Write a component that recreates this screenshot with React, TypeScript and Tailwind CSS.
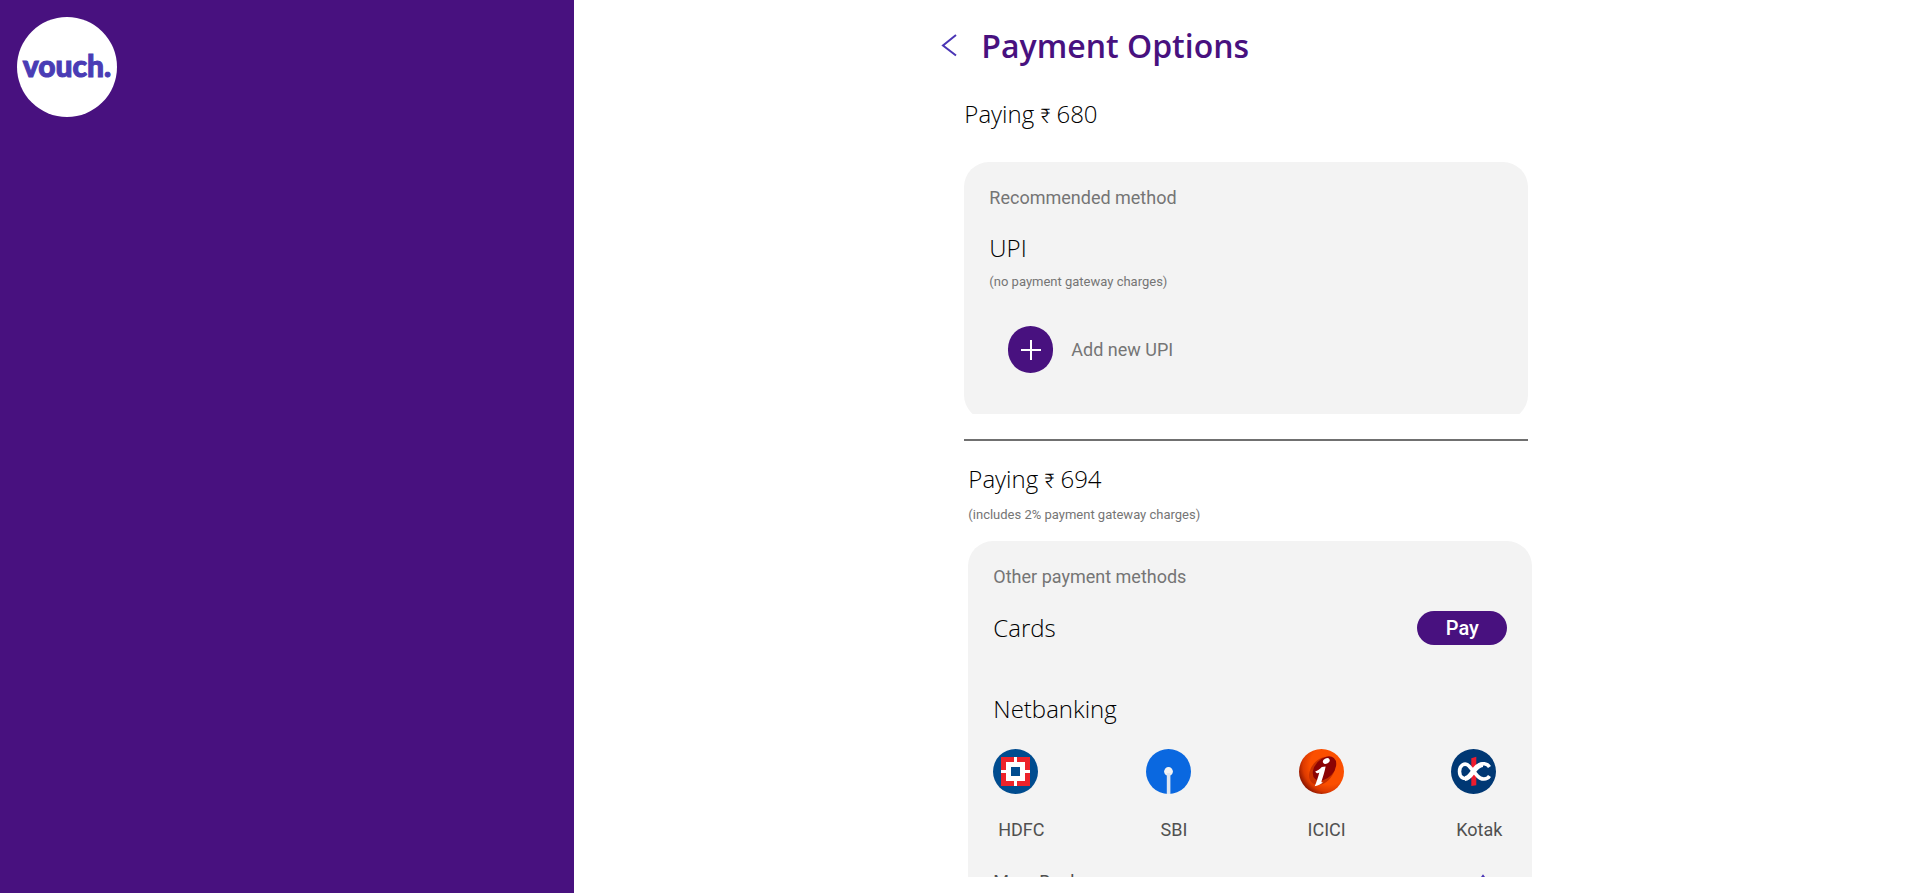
import type { ReactNode } from "react";

const heading = "font-['Open_Sans',sans-serif] text-2xl leading-8 font-light text-black";
const caption = "text-lg leading-6 text-[#757575]";
const note = "text-[13px] leading-4 text-[#757575]";

function HdfcLogo() {
  return (
    <svg viewBox="0 0 45 45" className="size-full" aria-hidden="true">
      <circle cx="22.5" cy="22.5" r="22.5" fill="#004c8f" />
      <rect x="8" y="8" width="29" height="29" fill="#ed232a" />
      <path d="M21 8h3v29h-3zM8 21h29v3H8z" fill="#fff" />
      <rect x="13" y="13" width="19" height="19" fill="#fff" />
      <rect x="18" y="18" width="9" height="9" fill="#004c8f" />
    </svg>
  );
}

function SbiLogo() {
  return (
    <svg viewBox="0 0 45 45" className="size-full" aria-hidden="true">
      <circle cx="22.5" cy="22.5" r="22.5" fill="#0a68e0" />
      <circle cx="22.5" cy="22.5" r="4.4" fill="#f3f3f3" />
      <path d="M20.8 24h3.6v21h-3.6z" fill="#dfe6f0" />
    </svg>
  );
}

function IciciLogo() {
  return (
    <svg viewBox="0 0 45 45" className="size-full" aria-hidden="true">
      <defs>
        <radialGradient id="icici" cx="0.68" cy="0.36" r="0.72">
          <stop offset="0.6" stopColor="#fb4f00" />
          <stop offset="0.82" stopColor="#dd3a00" />
          <stop offset="1" stopColor="#8e1600" />
        </radialGradient>
      </defs>
      <circle cx="22.5" cy="22.5" r="22.5" fill="url(#icici)" />
      <ellipse cx="23" cy="22" rx="15.5" ry="11" transform="rotate(-52 23 22)" fill="#c73000" />
      <ellipse cx="25.5" cy="19.5" rx="14" ry="9.5" transform="rotate(-48 25.5 19.5)" fill="#8b0304" />
      <ellipse cx="27.3" cy="12" rx="3.6" ry="2.6" transform="rotate(-30 27.3 12)" fill="#fff" />
      <path
        d="M16.2 22.4c2.4-.6 4.6-2.3 6.6-4.3l3.8-.7c-.8 5-2.6 10.2-4.1 14.8-.4 1.3.7 1.4 1.8.5-1.6 2.2-4.6 3.5-8.6 4.6 1.8-4.3 3.7-9.6 4.6-13.8-1.3.9-2.9 1.2-4.1-1.1z"
        fill="#fff"
      />
    </svg>
  );
}

function KotakLogo() {
  return (
    <svg viewBox="0 0 45 45" className="size-full" aria-hidden="true">
      <circle cx="22.5" cy="22.5" r="22.5" fill="#003874" />
      <path d="M20.3 9.3l5-1.6v28.5l-5 .8z" fill="#ed1c2e" />
      <g fill="none" stroke="#fff">
        <path
          d="M38.5 18C36 14 31 13.5 27.5 17L18 27.500C14 31.5 8.500 29 8.500 22.500C8.500 16 14 13 18 17L26.500 27C30 31 36 31 38.500 27"
          strokeWidth="3.5"
        />
        <path d="M14 29.500C21 29.500 23 15.500 32 15.500" strokeWidth="5" />
      </g>
    </svg>
  );
}

const banks: { name: string; logo: ReactNode }[] = [
  { name: "HDFC", logo: <HdfcLogo /> },
  { name: "SBI", logo: <SbiLogo /> },
  { name: "ICICI", logo: <IciciLogo /> },
  { name: "Kotak", logo: <KotakLogo /> },
];

function Rupee() {
  return <span className="font-[Roboto,sans-serif] text-xl leading-none font-light">₹</span>;
}

export default function App() {
  return (
    <div className="flex h-screen bg-white font-[Roboto,sans-serif]">
      <aside className="w-[calc(30%+1px)] shrink-0 bg-[#48117f] p-4">
        <div className="mt-px ml-px flex size-[100px] items-center justify-center rounded-full bg-white pb-1 font-[Lato,sans-serif] text-[30px] leading-none font-black text-[#4a3cb5] [-webkit-text-stroke:1px_#4a3cb5]">
          vouch.
        </div>
      </aside>

      <main className="flex min-w-0 flex-1 justify-center overflow-hidden pb-4">
        <div className="flex w-full max-w-[600px] flex-col">
          <header className="flex items-center gap-6 pt-[22px]">
            <button type="button" aria-label="Back" className="h-6 w-4">
              <svg viewBox="0 0 16 24" className="size-full" fill="none" stroke="#4a35b5" strokeWidth="2" aria-hidden="true">
                <path d="M15 1L2 11.5l13 10" />
              </svg>
            </button>
            <h1 className="font-['Open_Sans',sans-serif] text-[32px] leading-12 font-semibold text-[#48117f]">
              Payment Options
            </h1>
          </header>

          <div className="min-h-0 flex-1 overflow-hidden pr-[9px] pl-[23px]">
            <section className="mr-1">
              <h2 className={`${heading} pt-7`}>
                Paying <Rupee /> 680
              </h2>
              <div className="mt-8 overflow-hidden">
                <div className="-mb-1.5 rounded-[25px] bg-[#f3f3f3] px-[25px] pt-6 pb-[47px]">
                  <p className={caption}>Recommended method</p>
                  <h3 className={`${heading} mt-[22px]`}>UPI</h3>
                  <p className={`${note} mt-2.5`}>(no payment gateway charges)</p>
                  <button type="button" className="mt-9 ml-[19px] flex items-center gap-[18px]">
                    <span className="flex h-[47px] w-[45px] items-center justify-center rounded-[23px] bg-[#48117f]">
                      <svg viewBox="0 0 20 20" className="size-5" stroke="#fff" strokeWidth="2" aria-hidden="true">
                        <path d="M10 0v20M0 10h20" />
                      </svg>
                    </span>
                    <span className={caption}>Add new UPI</span>
                  </button>
                </div>
              </div>
              <hr className="mt-[25px] border-t-2 border-[#707070]" />
            </section>

            <section className="ml-1">
              <h2 className={`${heading} pt-[22px]`}>
                Paying <Rupee /> 694
              </h2>
              <p className={`${note} mt-3`}>(includes 2% payment gateway charges)</p>
              <div className="mt-[18px] rounded-t-[25px] bg-[#f3f3f3] px-[25px] pt-6 pb-6">
                <p className={caption}>Other payment methods</p>
                <div className="mt-[22px] flex items-center justify-between">
                  <h3 className={heading}>Cards</h3>
                  <button type="button" className="h-[34px] w-[90px] rounded-full bg-[#48117f] text-xl leading-6 font-medium text-white">
                    Pay
                  </button>
                </div>
                <h3 className={`${heading} mt-12`}>Netbanking</h3>
                <div className="mt-6 flex justify-between">
                  {banks.map((bank) => (
                    <button key={bank.name} type="button" className="w-14 text-left">
                      <span className="block size-[45px]">{bank.logo}</span>
                      <span className="mt-6 block text-center text-lg leading-6 text-[#505050]">{bank.name}</span>
                    </button>
                  ))}
                </div>
                <button type="button" className="mt-7 flex w-full items-center justify-between pr-4 text-lg leading-6 text-[#505050]">
                  More Banks
                  <svg viewBox="0 0 16 16" className="size-4" fill="none" stroke="#4a35b5" strokeWidth="2" aria-hidden="true">
                    <path d="M2 10l6-8 6 8" />
                  </svg>
                </button>
              </div>
            </section>
          </div>
        </div>
      </main>
    </div>
  );
}
